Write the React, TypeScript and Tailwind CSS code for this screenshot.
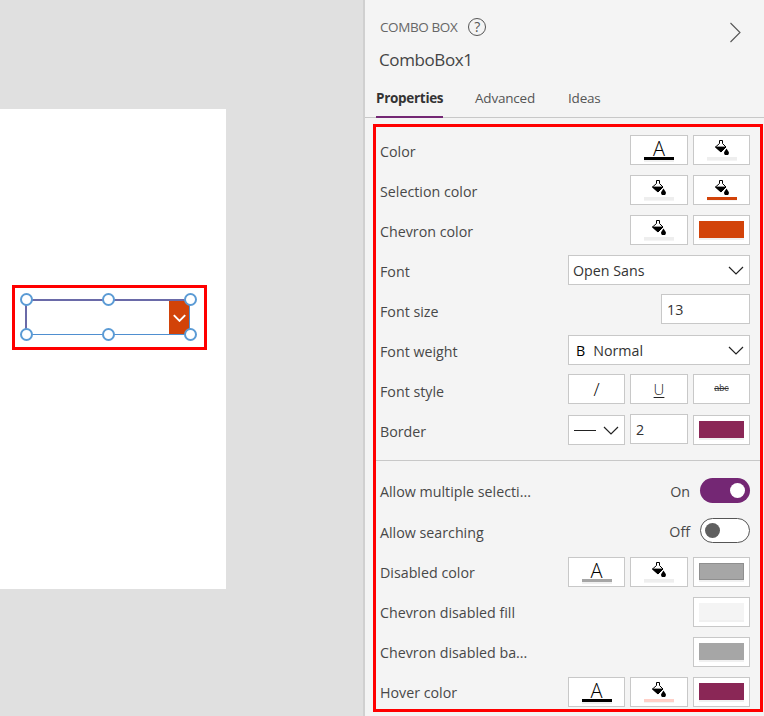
import type { ReactNode } from "react";

const font = "font-['Open_Sans','Liberation_Sans',sans-serif]";

function Bucket() {
  return (
    <svg width="14" height="15" viewBox="0 0 14 15" className="block">
      <path d="M4.5 .5 L7.5 .5 L7.5 3.5 L11 7 L6 12 L.5 7 L4.5 3.5 Z" fill="none" stroke="#000" strokeWidth="1" />
      <path d="M.5 7 L11 7 L6 12 Z" fill="#000" stroke="#000" strokeWidth="0.8" />
      <path d="M11.5 8.5 L13.6 11.8 A2.4 2.4 0 1 1 9.4 11.8 Z" fill="#000" />
    </svg>
  );
}

function Chevron({ className = "", stroke = "#222222", width = 1.2 }: { className?: string; stroke?: string; width?: number }) {
  return (
    <svg width="16" height="9" viewBox="0 0 16 9" className={className}>
      <path d="M1 1 L8 8 L15 1" fill="none" stroke={stroke} strokeWidth={width} />
    </svg>
  );
}

function Box({ children, className = "w-[58px]" }: { children?: ReactNode; className?: string }) {
  return (
    <div className={`h-[30px] bg-white border border-[#c8c8c8] flex items-center justify-center relative ${className}`}>
      {children}
    </div>
  );
}

function LetterBtn({ bar, w = "w-[58px]" }: { bar: string; w?: string }) {
  return (
    <Box className={w}>
      <div className="flex flex-col items-center mt-[2px]">
        <span className="text-[20px] leading-[17px] h-[17px] text-black font-light">A</span>
        <div className={`w-[30px] h-[3px] ${bar}`} />
        <div className="w-[30px] h-[2px] bg-[#f0f0f0]" />
      </div>
    </Box>
  );
}

function BucketBtn({ bar = "bg-[#eeeeee]", w = "w-[57px]" }: { bar?: string; w?: string }) {
  return (
    <Box className={w}>
      <div className="flex flex-col items-center mt-[1px]">
        <Bucket />
        <div className={`w-[30px] h-[3px] mt-[2px] ${bar}`} />
        <div className="w-[30px] h-[1px] bg-[#f4f4f4]" />
      </div>
    </Box>
  );
}

function Swatch({ color }: { color: string }) {
  return (
    <Box className="w-[57px]">
      <div className="flex flex-col mt-[1px]">
        <div className={`w-[45px] h-[17px] ${color}`} />
        <div className="w-[45px] h-[2px] bg-[#f0f0f0]" />
      </div>
    </Box>
  );
}

function Row({ label, children, h = "h-[40px]", up = "", labelTop = "mt-[4px]" }: { label: string; children?: ReactNode; h?: string; up?: string; labelTop?: string }) {
  return (
    <div className={`flex items-center justify-between ${h}`}>
      <span className={`text-[14.25px] text-[#484848] whitespace-nowrap ${labelTop}`}>{label}</span>
      <div className={`flex items-center gap-[5px] ${up}`}>{children}</div>
    </div>
  );
}

function Select({ children, w }: { children: ReactNode; w: string }) {
  return (
    <Box className={`${w} !justify-between pl-[4px] pr-[5px]`}>
      {children}
      <Chevron />
    </Box>
  );
}

function Handle({ pos }: { pos: string }) {
  return <div className={`absolute w-[13px] h-[13px] rounded-full bg-white border-2 border-[#5b9bd5] ${pos}`} />;
}

export default function App() {
  return (
    <div className={`w-[764px] h-[716px] overflow-hidden flex bg-[#e0e0e0] ${font}`}>
      {/* canvas */}
      <div className="w-[363px] shrink-0 pt-[109px]">
        <div className="w-[226px] h-[480px] bg-white pt-[176px] pl-[12px]">
          <div className="w-[195px] h-[65px] border-[3px] border-[#ff0000] pt-[11px] pl-[10px]">
            <div className="relative w-[165px] h-[36px] border border-[#4f8fd0] border-t-[2px] border-t-[#6a6aa8] border-l-[2px] border-l-[#6a6aa8] flex justify-end">
              <div className="w-[20px] h-[33px] bg-[#d24309] flex items-center justify-center">
                <Chevron stroke="#ffffff" width={2.4} className="w-[13px] h-[8px]" />
              </div>
              <Handle pos="-left-[7px] -top-[8px]" />
              <Handle pos="left-[75px] -top-[8px]" />
              <Handle pos="-right-[8px] -top-[8px]" />
              <Handle pos="-left-[7px] -bottom-[7px]" />
              <Handle pos="left-[75px] -bottom-[7px]" />
              <Handle pos="-right-[8px] -bottom-[7px]" />
            </div>
          </div>
        </div>
      </div>

      {/* properties panel */}
      <div className="flex-1 bg-[#f4f4f4] border-l-2 border-[#d0d0d0] flex flex-col">
        <div className="relative h-[118px] border-b border-[#c8c8c8] shrink-0">
          <div className="flex items-center gap-[11px] pl-[15px] pt-[17px] h-[36px]">
            <span className="text-[13.5px] text-[#666666] tracking-[-0.4px] leading-[20px]">COMBO BOX</span>
            <div className="w-[18px] h-[18px] rounded-full border border-[#555555] flex items-center justify-center text-[14px] text-[#555555] leading-none">?</div>
          </div>
          <div className="pl-[14px] pt-[11px] text-[17px] leading-[26px] text-[#444444] tracking-[-0.4px]">ComboBox1</div>
          <svg width="13" height="21" viewBox="0 0 13 21" className="absolute left-[364px] top-[22px]">
            <path d="M1.5 1 L11 10.5 L1.5 20" fill="none" stroke="#555555" strokeWidth="1.1" />
          </svg>
          <div className="flex gap-[32px] pl-[11px] pt-[15px] text-[13.5px] leading-[20px] text-[#555555] tracking-[-0.2px]">
            <div className="font-bold text-[#333333] h-[30px] border-b-2 border-[#742774] w-[67px] whitespace-nowrap tracking-[-0.3px]">Properties</div>
            <div>Advanced</div>
            <div className="ml-[1px]">Ideas</div>
          </div>
        </div>

        <div className="mt-[6px] ml-[8px] w-[390px] h-[588px] border-[3px] border-[#ff0000] pl-[4px] pt-[3px]">
          <div className="pr-[10px]">
            <Row label="Color">
              <LetterBtn bar="bg-black" />
              <BucketBtn />
            </Row>
            <Row label="Selection color">
              <BucketBtn w="w-[58px]" />
              <BucketBtn bar="bg-[#d24309]" />
            </Row>
            <Row label="Chevron color">
              <BucketBtn w="w-[58px]" />
              <Swatch color="bg-[#d24309]" />
            </Row>
            <Row label="Font">
              <Select w="w-[182px]">
                <span className="text-[14.25px] text-[#333333] mt-[2px]">Open Sans</span>
              </Select>
            </Row>
            <Row label="Font size" up="mb-[2px]">
              <Box className="w-[89px] !justify-start px-[5px]">
                <span className="text-[14.25px] text-[#333333] mt-[2px]">13</span>
              </Box>
            </Row>
            <Row label="Font weight">
              <Select w="w-[182px]">
                <span className="text-[14.25px] text-[#333333] mt-[2px]">
                  <span className="text-black ml-[3px] mr-[8px]">B</span>Normal
                </span>
              </Select>
            </Row>
            <Row label="Font style" up="mb-[2px]">
              <Box className="w-[57px]"><span className="text-[18px] font-light text-black">/</span></Box>
              <Box><span className="text-[15px] font-light text-[#222222] underline underline-offset-2">U</span></Box>
              <Box className="w-[57px]"><span className="text-[9px] text-[#333333] line-through font-['Liberation_Sans',sans-serif]">abc</span></Box>
            </Row>
            <Row label="Border">
              <Select w="w-[57px]">
                <div className="w-[22px] h-px bg-[#222222] ml-[1px]" />
              </Select>
              <div className="mb-[2px]">
                <Box className="w-[58px] !justify-start px-[5px]">
                  <span className="text-[14.25px] text-[#333333] mt-[2px]">2</span>
                </Box>
              </div>
              <Swatch color="bg-[#8a2756]" />
            </Row>
          </div>
          <div className="-ml-[4px] h-px bg-[#c8c8c8] mt-[10px] mb-[9px]" />
          <div className="pr-[10px]">
            <Row label="Allow multiple selecti..." h="h-[41px]" labelTop="mt-[2px]">
              <span className="text-[14.25px] text-[#484848] mr-[5px] mt-[2px]">On</span>
              <div className="w-[50px] h-[25px] rounded-full bg-[#742774] flex items-center justify-end pr-[5px]">
                <div className="w-[15px] h-[15px] rounded-full bg-white" />
              </div>
            </Row>
            <Row label="Allow searching" h="h-[41px]" up="mb-[2px]" labelTop="mt-[2px]">
              <span className="text-[14.25px] text-[#484848] mr-[5px] mt-[2px]">Off</span>
              <div className="w-[50px] h-[25px] rounded-full bg-white border border-[#555555] flex items-center pl-[4px]">
                <div className="w-[15px] h-[15px] rounded-full bg-[#5f5f5f]" />
              </div>
            </Row>
            <Row label="Disabled color" labelTop="mt-[2px]">
              <LetterBtn w="w-[57px]" bar="bg-[#a6a6a6]" />
              <BucketBtn w="w-[58px]" />
              <Swatch color="bg-[#a6a6a6] border border-[#8f8f8f]" />
            </Row>
            <Row label="Chevron disabled fill" labelTop="mt-[2px]">
              <Swatch color="bg-[#f4f4f4]" />
            </Row>
            <Row label="Chevron disabled ba..." labelTop="mt-[2px]">
              <Swatch color="bg-[#a6a6a6]" />
            </Row>
            <Row label="Hover color" labelTop="mt-[2px]">
              <LetterBtn w="w-[57px]" bar="bg-black" />
              <BucketBtn w="w-[58px]" bar="bg-[#ffd0c8]" />
              <Swatch color="bg-[#8a2756]" />
            </Row>
          </div>
        </div>
      </div>
    </div>
  );
}
